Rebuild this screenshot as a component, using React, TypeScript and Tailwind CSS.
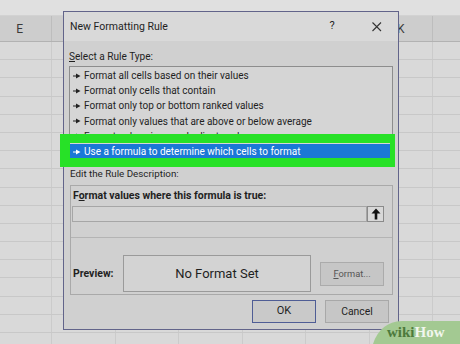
import React from "react";

const COLS = ["E", "", "", "", "", "", "K", ""];
const ROWS = Array.from({ length: 17 }, (_, i) => i);

const RULES = [
  "Format all cells based on their values",
  "Format only cells that contain",
  "Format only top or bottom ranked values",
  "Format only values that are above or below average",
  "Format only unique or duplicate values",
];

const font = { fontFamily: 'Roboto, "Open Sans", Arial, sans-serif' };

function Pointer({ color = "#222" }: { color?: string }) {
  return (
    <svg width="8" height="6" viewBox="0 0 8 6" className="shrink-0">
      <rect x="0" y="2.5" width="4" height="1" fill={color} />
      <path d="M3 0.5 L7.5 3 L3 5.5 Z" fill={color} />
    </svg>
  );
}

function Sheet() {
  return (
    <div className="flex flex-col">
      <div className="h-[16px] bg-[#e0e0e0] border-b border-[#d2d2d2]" />
      <div className="flex h-[26px] ml-[-11.5px] bg-[#cdcdcd] border-b border-[#b2b2b2]">
        {COLS.map((c, i) => (
          <div
            key={i}
            className="w-[63.5px] shrink-0 border-r border-[#bdbdbd] flex items-end pb-[3px] justify-center text-[12px] text-[#3a3a3a]"
          >
            {c}
          </div>
        ))}
      </div>
      {ROWS.map((r) => (
        <div key={r} className="flex h-[18.2px] ml-[-11.5px] border-b border-[#c8c8c8]">
          {COLS.map((_, i) => (
            <div key={i} className="w-[63.5px] shrink-0 border-r border-[#cbcbcb] bg-[#d9d9d9]" />
          ))}
        </div>
      ))}
    </div>
  );
}

function Dialog() {
  return (
    <div className="absolute left-[63px] top-[11px] w-[336px] h-[319px] border border-[#62648a] bg-[#d0d0d0] flex flex-col text-[#1f1f1f]">
      {/* title bar */}
      <div className="h-[29px] shrink-0 bg-[#d9d9d9] flex items-center pl-[6px] pr-[13px]">
        <span className="flex-1 text-[10.5px]">New Formatting Rule</span>
        <span className="w-[20px] text-center text-[11px] mr-[27px]">?</span>
        <svg width="16" height="12" viewBox="0 0 16 12">
          <path d="M3.5 1.5 L12 10 M12 1.5 L3.5 10" stroke="#333" strokeWidth="1.1" />
        </svg>
      </div>

      <div className="flex flex-col pl-[5px] pr-[5px]">
        <div className="pt-[8px] h-[25px] text-[10.1px] leading-[16px]">
          <span className="underline">S</span>elect a Rule Type:
        </div>
        {/* rule list */}
        <div className="border border-[#8d8d8d] bg-[#d5d5d5] pt-[1px] pb-[3px]">
          {RULES.map((t) => (
            <div key={t} className="h-[15.2px] flex items-center gap-[3px] pl-[3px] text-[10px]">
              <Pointer />
              <span>{t}</span>
            </div>
          ))}
          <div className="h-[15.2px] mr-[1px] flex items-center gap-[3px] pl-[3px] text-[10px] bg-[#1b78d6] text-white">
            <Pointer color="#fff" />
            <span>Use a formula to determine which cells to format</span>
          </div>
        </div>
        <div className="h-[22px] pl-[1px] flex items-center text-[9.8px]">Edit the Rule Description:</div>

        {/* description box */}
        <div className="ml-[1px] h-[110px] border border-[#a9a9a9] flex flex-col">
          <div className="pt-[3px] pl-[2px] h-[20px] text-[10.5px] font-bold leading-[14px]">
            F<span className="underline">o</span>rmat values where this formula is true:
          </div>
          <div className="flex ml-[1px] mr-[8px] h-[16px]">
            <div className="flex-1 border border-[#a6a6a6] bg-[#d3d3d3]" />
            <div className="w-[17px] border border-[#8a8a8a] bg-[#d8d8d8] flex items-center justify-center">
              <svg width="10" height="12" viewBox="0 0 10 12">
                <path d="M5 0.5 L9.5 5.5 L6.3 5.5 L6.3 11.5 L3.7 11.5 L3.7 5.5 L0.5 5.5 Z" fill="#111" />
              </svg>
            </div>
          </div>
          <div className="mt-[15px] border-t border-[#b4b4b4]" />
          <div className="flex items-center mt-[17px] pl-[2px]">
            <span className="w-[50px] text-[10.5px] font-bold">Preview:</span>
            <div className="w-[188px] h-[37px] border border-[#9a9a9a] bg-[#d3d3d3] flex items-center justify-center text-[13px]">
              No Format Set
            </div>
            <div className="ml-[9px] w-[64px] h-[24px] mt-[1px] border border-[#ababab] bg-[#c6c6c6] flex items-center justify-center text-[9.3px] text-[#555]">
              <span className="underline">F</span>ormat...
            </div>
          </div>
        </div>

        {/* buttons */}
        <div className="flex justify-end gap-[9px] pr-[4px] mt-[5px]">
          <div className="w-[64px] h-[23px] border border-[#4f5d95] bg-[#c9c9c9] flex items-center justify-center text-[11px]">
            OK
          </div>
          <div className="w-[64px] h-[23px] border border-[#a8a8a8] bg-[#c6c6c6] flex items-center justify-center text-[10.4px]">
            Cancel
          </div>
        </div>
      </div>
    </div>
  );
}

function Watermark() {
  return (
    <div className="absolute left-[370px] top-[318px] w-[90px] h-[26px]">
      <svg width="90" height="26" viewBox="0 0 90 26" className="absolute inset-0">
        <path d="M3 26 Q10 4 32 3 L90 3 L90 26 Z" fill="#a3c992" />
      </svg>
      <div
        className="absolute left-[17px] top-[5px] text-[15px] font-bold leading-[18px]"
        style={{ fontFamily: '"Liberation Serif", "DejaVu Serif", serif' }}
      >
        <span className="text-[#4d7a3c]">wiki</span>
        <span className="text-[#f1f6ee]">How</span>
      </div>
    </div>
  );
}

export default function App() {
  return (
    <div className="relative w-[460px] h-[344px] overflow-hidden bg-[#d9d9d9]" style={font}>
      <Sheet />
      <Dialog />
      {/* green highlight around the selected rule */}
      <div className="absolute left-[60px] top-[134px] w-[335px] h-[33px] border-t-[9px] border-b-[9px] border-l-[10px] border-r-[5px] border-[#27e127]" />
      <Watermark />
    </div>
  );
}
